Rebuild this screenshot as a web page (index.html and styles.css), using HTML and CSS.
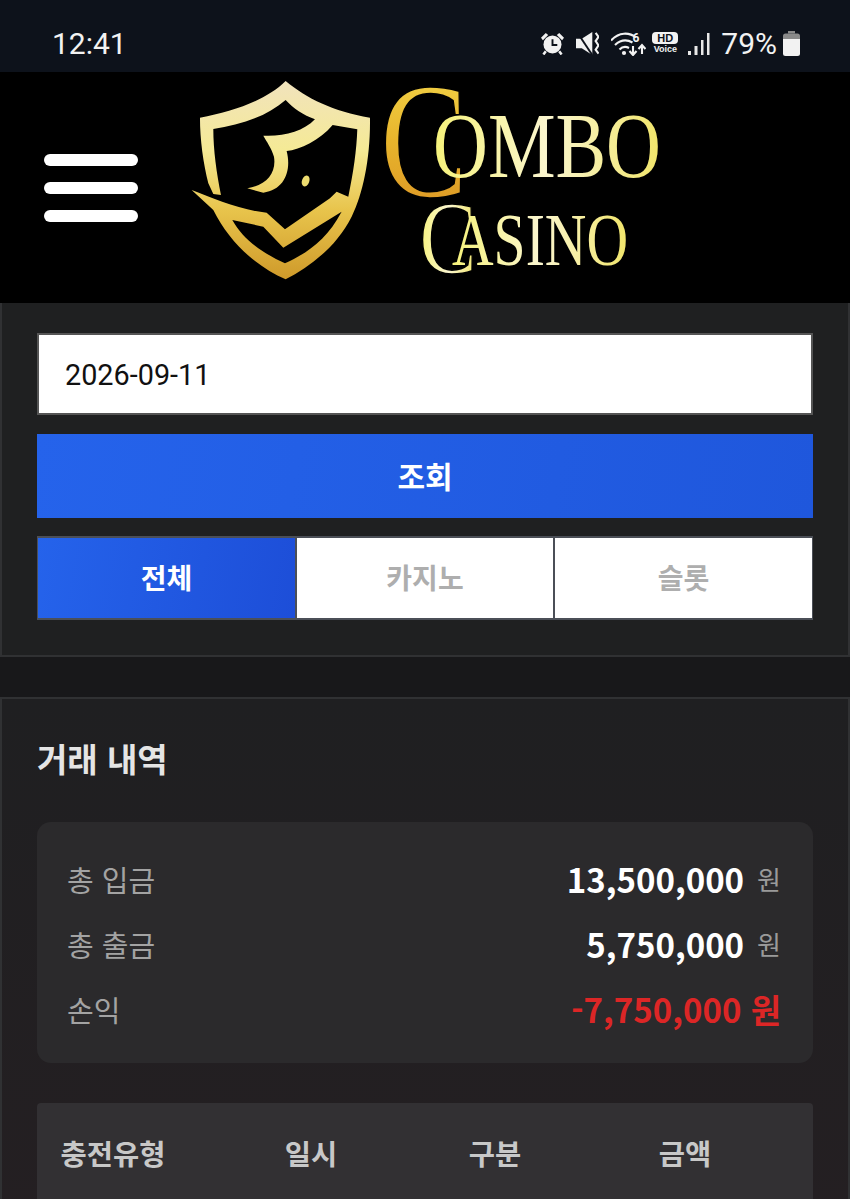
FILE: index.html
```html
<!DOCTYPE html>
<html lang="ko">
<head>
<meta charset="utf-8">
<title>Combo Casino</title>
<link rel="stylesheet" href="styles.css">
</head>
<body>
<div class="page">
  <div class="status">
    <div class="time">12:41</div>
    <div class="status-icons">
      <svg class="ic-alarm" viewBox="0 0 24 24"><circle cx="12" cy="13" r="9.400" fill="#f2f2f2"/><path d="M12 7.500v6h5" fill="none" stroke="#0d121b" stroke-width="2"/><path d="M0 6 5 1l2.500 2L2 8.500zM24 6 19 1l-2.500 2L22 8.500z" fill="#f2f2f2"/><path d="M5 20l-2.500 3.500M19 20l2.500 3.500" stroke="#f2f2f2" stroke-width="2.600"/></svg>
      <svg class="ic-mute" viewBox="0 0 24 24"><path d="M0 7h6L17 0v24L6 17H0z" fill="#f2f2f2"/><path d="M1 0l16 24" stroke="#0d121b" stroke-width="2"/><path d="M20.500 1l3 4-3 4.500 3 4.500-3 4.500 3 4" fill="none" stroke="#f2f2f2" stroke-width="2.200"/></svg>
      <svg class="ic-wifi" viewBox="0 0 35 25"><path d="M0 9.500C8 1 18 1 25 6.500M4 14c6-5.500 12-5.500 17.500-2.500M8.500 18.500c3-3 6.500-3 9.500-1.500" fill="none" stroke="#f2f2f2" stroke-width="2.200"/><circle cx="13" cy="22" r="2.100" fill="#f2f2f2"/><text class="wifi-six" x="21.500" y="11">6</text><path d="M22 15v9M18.500 20l3.500 4 3.500-4M31 23v-9M27.500 18l3.500-4 3.500 4" fill="none" stroke="#f2f2f2" stroke-width="2.100"/></svg>
      <div class="hd"><span class="hd-badge">HD</span><span class="hd-voice">Voice</span></div>
      <svg class="ic-signal" viewBox="0 0 23 23"><path d="M1 19h3v4H1zM7.500 14h3v9h-3zM14 8h2.500v15H14zM20 1h2.500v22H20z" fill="#e8e8e8"/></svg>
      <div class="pct">79%</div>
      <svg class="ic-batt" viewBox="0 0 17 25"><path d="M5 0h7v2.500H5z" fill="#8a8a8a"/><path d="M2.500 2.500h12A2.500 2.500 0 0 1 17 5v3H0V5a2.500 2.500 0 0 1 2.500-2.500z" fill="#8a8a8a"/><path d="M0 8h17v14.500A2.500 2.500 0 0 1 14.500 25h-12A2.500 2.500 0 0 1 0 22.500z" fill="#f2f2f2"/></svg>
    </div>
  </div>

  <header class="header">
    <div class="burger"><span></span><span></span><span></span></div>
    <svg class="logo" viewBox="190 78 475 204">
      <defs>
        <linearGradient id="gShield" x1="0" y1="0" x2="0" y2="1">
          <stop offset="0" stop-color="#f1e3bd"/>
          <stop offset="0.35" stop-color="#f5ea95"/>
          <stop offset="0.65" stop-color="#e8c44c"/>
          <stop offset="1" stop-color="#cf9a2a"/>
        </linearGradient>
        <linearGradient id="gC" x1="0" y1="0" x2="0" y2="1">
          <stop offset="0" stop-color="#f5dc50"/>
          <stop offset="0.5" stop-color="#e8b52c"/>
          <stop offset="1" stop-color="#d98f24"/>
        </linearGradient>
        <linearGradient id="gText" x1="0" y1="0" x2="1" y2="0">
          <stop offset="0" stop-color="#f6f27a"/>
          <stop offset="0.5" stop-color="#fbf6cf"/>
          <stop offset="1" stop-color="#f1e56a"/>
        </linearGradient>
      </defs>
      <g transform="translate(0 70) scale(0.3333)">
        <path fill="url(#gShield)" fill-rule="evenodd" d="M857 33C920 85 1000 125 1110 143C1112 260 1090 370 1055 440C1010 530 930 590 857 628C770 590 690 520 640 420L575 360C640 385 720 420 800 428L855 478L990 385L1010 365L1045 380C1060 310 1070 240 1072 178L998 165C960 210 900 240 860 243C875 300 855 360 790 368L742 355C800 345 830 310 822 260C815 235 800 215 790 197C850 200 910 185 945 148C910 135 880 115 857 90C800 140 720 165 640 177C640 240 650 310 663 375L640 372L625 340C610 280 600 210 600 143C700 125 800 90 857 33ZM697 450C730 510 790 550 855 580C920 550 980 510 1025 425L850 533L790 470Z"/>
        <ellipse cx="917" cy="333" rx="11" ry="17" fill="#eddc70" transform="rotate(20 917 333)"/>
      </g>
      <text class="logo-c logo-thin" x="380" y="196" textLength="88" lengthAdjust="spacingAndGlyphs" fill="url(#gC)">C</text>
      <text class="logo-ombo" x="433" y="177" textLength="228" lengthAdjust="spacingAndGlyphs" fill="url(#gText)">OMBO</text>
      <text class="logo-c2 logo-thin" x="419" y="273" textLength="58" lengthAdjust="spacingAndGlyphs" fill="url(#gText)">C</text>
      <text class="logo-asino" x="452" y="265" textLength="176" lengthAdjust="spacingAndGlyphs" fill="url(#gText)">ASINO</text>
    </svg>
  </header>

  <section class="filter">
    <div class="date-input">2026-09-11</div>
    <button class="search-btn">조회</button>
    <div class="tabs">
      <div class="tab tab-active">전체</div>
      <div class="tab">카지노</div>
      <div class="tab">슬롯</div>
    </div>
  </section>

  <section class="history">
    <h2 class="title">거래 내역</h2>
    <div class="summary">
      <div class="row"><span class="label">총 입금</span><span class="value"><b>13,500,000</b><i>원</i></span></div>
      <div class="row"><span class="label">총 출금</span><span class="value"><b>5,750,000</b><i>원</i></span></div>
      <div class="row"><span class="label">손익</span><span class="value value-loss">-7,750,000 원</span></div>
    </div>
    <div class="thead">
      <div>충전유형</div>
      <div>일시</div>
      <div>구분</div>
      <div>금액</div>
    </div>
  </section>
</div>
</body>
</html>
```

FILE: styles.css
```css
* { box-sizing: border-box; }
html, body { margin: 0; padding: 0; background: #18181a; }
body { width: 850px; height: 1199px; overflow: hidden; font-family: "Noto Sans CJK KR", "Noto Sans", sans-serif; }
.page { width: 850px; }

.status { height: 72px; background: #0d121b; display: flex; align-items: center; justify-content: space-between; padding: 15px 50px 0 52px; color: #f2f2f2; font-family: Roboto, sans-serif; }
.time { font-size: 30px; line-height: 40px; }
.status-icons { display: flex; align-items: center; height: 40px; }
.ic-alarm { width: 23px; height: 23px; margin-right: 12px; }
.ic-mute { width: 23px; height: 23px; margin-right: 12px; }
.ic-wifi { width: 35px; height: 25px; margin-right: 6px; }
.wifi-six { font-family: Roboto, sans-serif; font-size: 12px; font-weight: 700; fill: #f2f2f2; }
.hd { width: 26px; display: flex; flex-direction: column; align-items: center; margin-right: 9px; }
.hd-badge { width: 26px; height: 12px; background: #f2f2f2; color: #0d121b; border-radius: 4px; font: 700 11px/12px "Liberation Sans", sans-serif; text-align: center; }
.hd-voice { font: 700 9px/11px "Liberation Sans", sans-serif; color: #f2f2f2; }
.ic-signal { width: 23px; height: 23px; margin-right: 11px; }
.pct { font-size: 30px; line-height: 40px; margin-right: 6px; }
.ic-batt { width: 17px; height: 25px; }

.header { height: 231px; background: #000; display: flex; align-items: flex-start; }
.burger { width: 94px; margin: 82px 0 0 44px; display: flex; flex-direction: column; gap: 16px; }
.burger span { display: block; height: 12px; border-radius: 6px; background: #fff; }
.logo { width: 475px; height: 204px; margin: 6px 0 0 52px; overflow: visible; }
.logo text { font-family: "Liberation Serif", serif; }
.logo-thin { stroke: #000; stroke-width: 1.6px; }
.logo-c { font-size: 166px; }
.logo-ombo { font-size: 94px; }
.logo-c2 { font-size: 104px; }
.logo-asino { font-size: 74px; }

.filter { height: 354px; padding: 30px 35px 0; background: #1f2021; border: 2px solid #303133; border-top: 0; display: flex; flex-direction: column; }
.date-input { height: 82px; background: #fff; border: 2px solid #555; color: #111; font: 400 28.8px/80px Roboto, sans-serif; padding-left: 26px; margin: 0 0 19px; }
.search-btn { height: 84px; border: 0; padding: 0 0 2px; background: linear-gradient(100deg, #2563eb, #1f57dc); color: #fff; font: 700 30px "Noto Sans CJK KR", sans-serif; margin-bottom: 18px; }
.tabs { display: grid; grid-template-columns: 259px 258px 259px; height: 84px; }
.tab { background: #fff; border: 2px solid #4b4f57; border-left-width: 1px; border-right-width: 1px; color: #aeaeae; font-weight: 700; font-size: 28px; padding-bottom: 2px; display: flex; align-items: center; justify-content: center; }
.tab-active { background: linear-gradient(100deg, #2563eb, #1d4ed8); color: #fff; }

.history { margin-top: 40px; height: 520px; padding: 0 35px; background: linear-gradient(180deg, #1f1f21, #241f22); border: 2px solid #303133; border-bottom: 0; }
.title { margin: 0; font-size: 33px; line-height: 46px; font-weight: 700; color: #e5e5e5; padding-top: 36px; height: 123px; }
.summary { height: 241px; background: #2b2a2c; border-radius: 14px; padding: 24px 32px 0 30px; display: flex; flex-direction: column; }
.row { flex: none; height: 65px; display: flex; align-items: center; justify-content: space-between; }
.label { font-size: 29px; color: #a3a3a3; }
.value { display: flex; align-items: center; color: #fff; }
.value b { font-size: 33px; font-weight: 700; }
.value i { font-style: normal; font-size: 26px; color: #9a9a9a; margin-left: 13px; }
.value-loss { color: #dc2626; font-size: 33px; font-weight: 700; }

.thead { margin-top: 40px; height: 102px; padding-bottom: 3px; background: #323033; border-radius: 4px 4px 0 0; display: grid; grid-template-columns: 152px 244px 124px 256px; align-items: center; text-align: center; color: #c8c8c8; font-size: 28.500px; font-weight: 700; }
```
